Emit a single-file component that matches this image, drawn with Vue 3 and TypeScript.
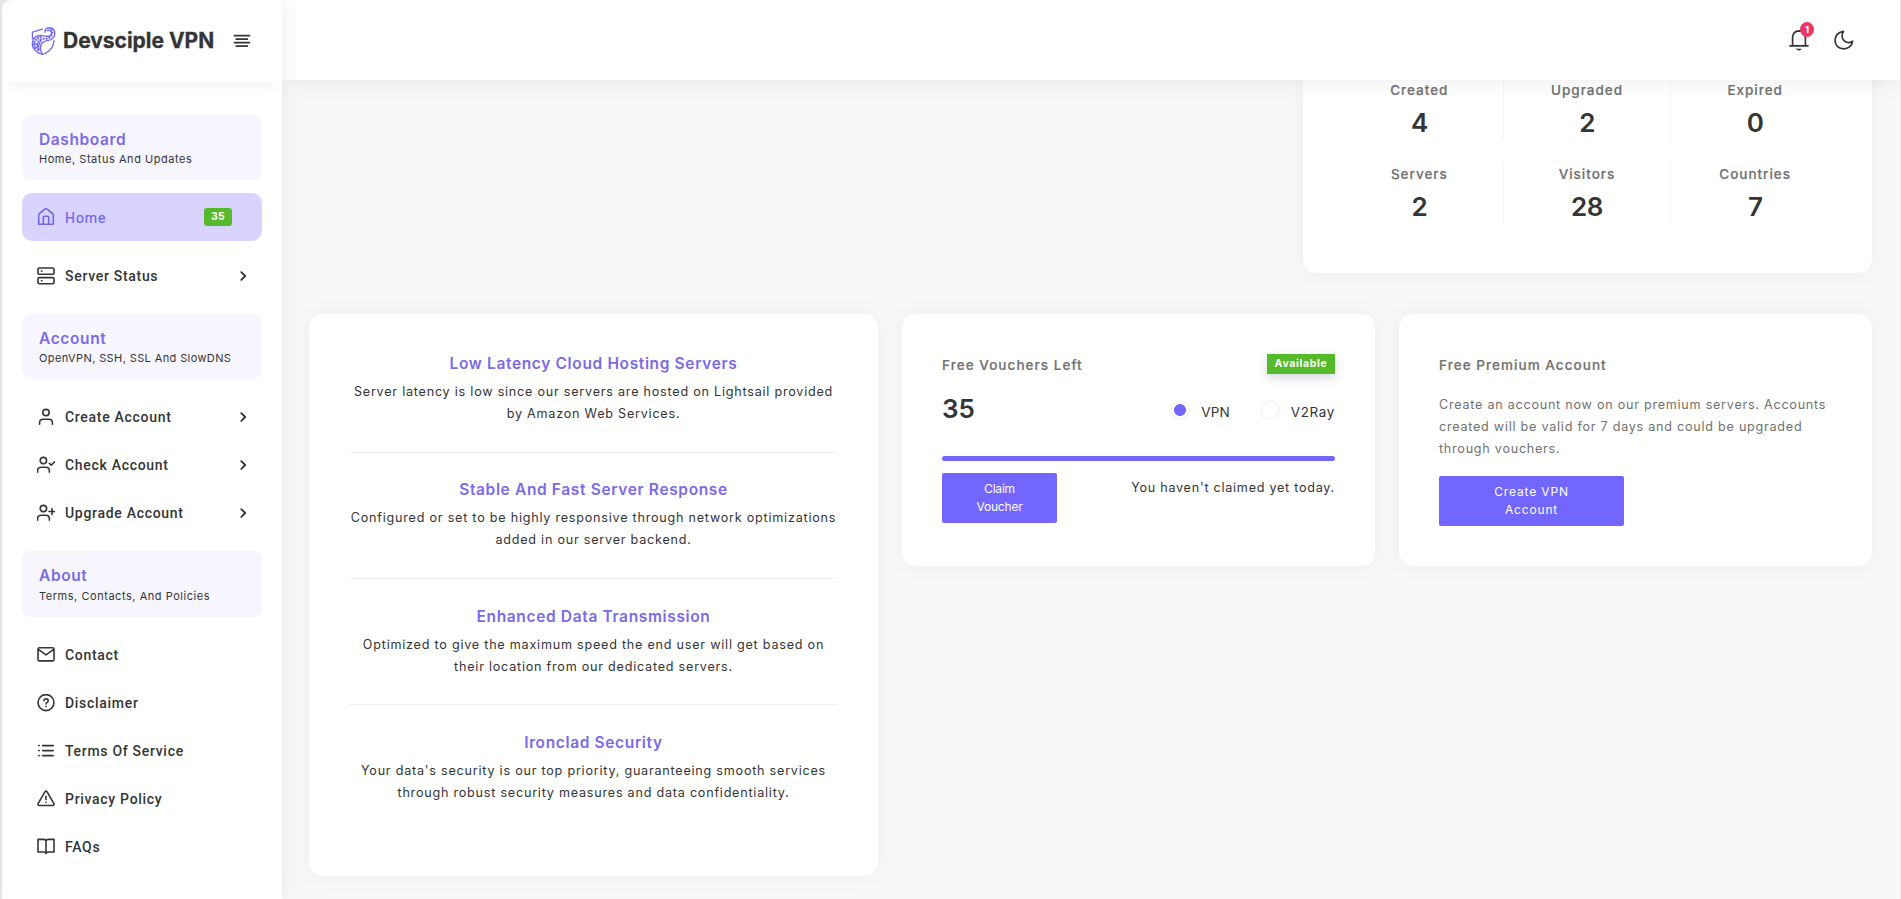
<script setup lang="ts">
interface NavItem {
  label: string
  icon: string
  arrow?: boolean
  badge?: string
  active?: boolean
}
interface NavGroup {
  title: string
  note: string
  items: NavItem[]
}

// Outline icons on an 18 x 18 grid
const icons: Record<string, string> = {
  home: 'M1.7 16.3V7.2Q1.7 6.2 2.5 5.5L7.9 1.2Q9 .4 10.1 1.2L15.5 5.5Q16.3 6.2 16.3 7.2V16.3ZM6.3 16V9.6Q6.3 8.2 7.6 8.2H10.4Q11.7 8.2 11.7 9.6V16',
  server: 'M2.2 1H15.8Q17 1 17 2.2V6Q17 7.2 15.8 7.2H2.2Q1 7.2 1 6V2.2Q1 1 2.2 1ZM2.2 10.6H15.8Q17 10.6 17 11.8V15.6Q17 16.8 15.8 16.8H2.2Q1 16.8 1 15.6V11.8Q1 10.6 2.2 10.6ZM4.4 4.1H4.9M4.4 13.7H4.9',
  user: 'M12.2 4.6A3.2 3.2 0 1 1 5.8 4.6A3.2 3.2 0 1 1 12.2 4.6M2.6 16.2V14.8Q2.6 11.2 6.2 11.2H11.8Q15.4 11.2 15.4 14.8V16.2',
  check: 'M9.6 4.6A3.2 3.2 0 1 1 3.2 4.6A3.2 3.2 0 1 1 9.6 4.6M.6 16.2V14.8Q.6 11.2 4.2 11.2H8.8Q12.4 11.2 12.4 14.8V16.2M12.4 7.4L14.2 9.2L17.6 5.8',
  plus: 'M9.6 4.6A3.2 3.2 0 1 1 3.2 4.6A3.2 3.2 0 1 1 9.6 4.6M.6 16.2V14.8Q.6 11.2 4.2 11.2H8.8Q12.4 11.2 12.4 14.8V16.2M12 7.5H18M15 4.5V10.5',
  mail: 'M2.4 1.7H15.6Q17 1.7 17 3.1V13.5Q17 14.9 15.6 14.9H2.4Q1 14.9 1 13.5V3.1Q1 1.7 2.4 1.7ZM1.4 3.3L9 8.9L16.6 3.3',
  help: 'M17 8.6A8 8 0 1 1 1 8.6A8 8 0 1 1 17 8.6M6.9 6.8Q7 4.7 9.1 4.7Q11.2 4.8 11.2 6.7Q11.2 7.8 10 8.5Q9 9 9 10M9 12.4V12.6',
  list: 'M5.6 3.6H16.2M5.6 8.6H16.2M5.6 13.6H16.2M1.8 3.6H2.2M1.8 8.6H2.2M1.8 13.6H2.2',
  alert: 'M7.9 1.9Q9 .2 10.1 1.9L16.8 13.3Q17.6 15.3 15.6 15.5H2.4Q.4 15.3 1.2 13.3ZM9 6.2V9.6M9 12.3V12.5',
  book: 'M9 3.2Q8.6 1.4 6.8 1.4H1V14H6.8Q8.6 14 9 15.6Q9.4 14 11.2 14H17V1.4H11.2Q9.4 1.4 9 3.2ZM9 3.2V15.6'
}

const groups: NavGroup[] = [
  {
    title: 'Dashboard',
    note: 'Home, Status And Updates',
    items: [
      { label: 'Home', icon: 'home', badge: '35', active: true },
      { label: 'Server Status', icon: 'server', arrow: true }
    ]
  },
  {
    title: 'Account',
    note: 'OpenVPN, SSH, SSL And SlowDNS',
    items: [
      { label: 'Create Account', icon: 'user', arrow: true },
      { label: 'Check Account', icon: 'check', arrow: true },
      { label: 'Upgrade Account', icon: 'plus', arrow: true }
    ]
  },
  {
    title: 'About',
    note: 'Terms, Contacts, And Policies',
    items: [
      { label: 'Contact', icon: 'mail' },
      { label: 'Disclaimer', icon: 'help' },
      { label: 'Terms Of Service', icon: 'list' },
      { label: 'Privacy Policy', icon: 'alert' },
      { label: 'FAQs', icon: 'book' }
    ]
  }
]

const stats = [
  { label: 'Created', value: 4 },
  { label: 'Upgraded', value: 2 },
  { label: 'Expired', value: 0 },
  { label: 'Servers', value: 2 },
  { label: 'Visitors', value: 28 },
  { label: 'Countries', value: 7 }
]

const features = [
  {
    title: 'Low Latency Cloud Hosting Servers',
    lines: ['Server latency is low since our servers are hosted on Lightsail provided', 'by Amazon Web Services.']
  },
  {
    title: 'Stable And Fast Server Response',
    lines: ['Configured or set to be highly responsive through network optimizations', 'added in our server backend.']
  },
  {
    title: 'Enhanced Data Transmission',
    lines: ['Optimized to give the maximum speed the end user will get based on', 'their location from our dedicated servers.']
  },
  {
    title: 'Ironclad Security',
    lines: ["Your data's security is our top priority, guaranteeing smooth services", 'through robust security measures and data confidentiality.']
  }
]
</script>

<template>
  <div class="page">
    <aside class="sidebar">
      <div class="brand">
        <svg class="logo" viewBox="0 0 25 28" fill="none" stroke="#7366ff" stroke-linecap="round" stroke-linejoin="round">
          <path stroke-width="1.3" d="M11.4 2.2L1.4 5.2V11.6M23 13.6Q22.6 19.6 18.4 23.4Q14.6 26.8 11.2 27.2" />
          <path stroke-width="1.4" d="M14 5.2Q13.6 1.2 18 .8Q23.6 .8 23.8 6Q23.8 12.2 17.6 13.4Q12.2 13.8 10.2 17.4Q8.2 21.4 11.2 27" />
          <path stroke-width="1.4" d="M16 3.6Q18.4 2.6 20 4.4Q21.6 7.4 18.2 9.2Q14.4 9.6 11.4 8.6Q4.4 8 2 13.2Q.2 18.8 3.4 22.6Q6.4 26.2 11.2 27.2" />
          <path stroke-width="2.3" stroke-dasharray=".1 2.9" d="M20.6 2.6Q22.4 6.8 19.4 10Q16.8 12 12.2 11.8Q7.6 12.8 6.2 16.8Q5.4 20.4 8 24.4" />
          <path stroke-width="2.2" stroke-dasharray=".1 2.6" d="M9.8 10.2Q4.4 11.6 3.2 15.8Q2.8 19.4 5.2 22.4M9.6 14.2Q7.6 16.4 7.6 20" />
          <path stroke-width="1.2" d="M2 17.2Q5.6 16 7.6 19.6M3.2 21.4Q6.4 20 8.8 22.4" />
        </svg>
        <span class="brand-name">Devsciple VPN</span>
        <svg class="menu" viewBox="0 0 18 14" stroke="#333536" stroke-width="1.7" stroke-linecap="round">
          <path d="M1.4 1.7H16.4M3.2 5.1H14.4M1.4 8.6H16.4M3.2 12.1H14.4" />
        </svg>
      </div>
      <nav class="nav">
        <section v-for="group in groups" :key="group.title" class="group">
          <div class="group-head">
            <div class="group-title">{{ group.title }}</div>
            <div class="group-note">{{ group.note }}</div>
          </div>
          <ul class="links">
            <li v-for="item in group.items" :key="item.label" class="link" :class="{ active: item.active }">
              <svg class="link-icon" viewBox="0 0 18 18"><path :d="icons[item.icon]" /></svg>
              <span class="link-label">{{ item.label }}</span>
              <span v-if="item.badge" class="count">{{ item.badge }}</span>
              <svg v-if="item.arrow" class="arrow" viewBox="0 0 7 10"><path d="M1.3 1.2L5.2 5L1.3 8.8" /></svg>
            </li>
          </ul>
        </section>
      </nav>
    </aside>

    <div class="main">
      <header class="topbar">
        <div class="bell">
          <svg viewBox="0 0 20 22" fill="none" stroke="#333536" stroke-width="1.7" stroke-linecap="round" stroke-linejoin="round">
            <path d="M1 16.8H19M3.6 16.6V8.2Q4 2 10 1.8Q16 2 16.4 8.2V16.6" />
            <path d="M7.8 20H12.2Q11.6 21.2 10 21.2Q8.4 21.2 7.8 20Z" fill="#333536" stroke-width=".6" />
          </svg>
          <span class="bell-count">1</span>
        </div>
        <svg class="moon" viewBox="0 0 20 20" fill="none" stroke="#333536" stroke-width="1.7" stroke-linecap="round" stroke-linejoin="round">
          <path d="M9.3 1.4Q6 8 11.2 11.6Q14.8 13.8 18.6 11.2Q17.6 18.2 10.2 18.8Q1.4 18.4 1 10.2Q1.4 2.8 9.3 1.4Z" />
        </svg>
      </header>

      <div class="card stats">
        <div v-for="stat in stats" :key="stat.label" class="stat">
          <div class="stat-label">{{ stat.label }}</div>
          <div class="stat-value">{{ stat.value }}</div>
        </div>
      </div>

      <div class="row">
        <div class="card features">
          <div v-for="feature in features" :key="feature.title" class="feature">
            <div class="feature-title">{{ feature.title }}</div>
            <div v-for="line in feature.lines" :key="line" class="feature-line">{{ line }}</div>
          </div>
        </div>

        <div class="card panel">
          <div class="split">
            <div class="panel-title">Free Vouchers Left</div>
            <span class="available">Available</span>
          </div>
          <div class="split vouchers">
            <div class="stat-value total">35</div>
            <div class="radios">
              <span class="radio on"></span><span class="radio-label first">VPN</span>
              <span class="radio"></span><span class="radio-label">V2Ray</span>
            </div>
          </div>
          <div class="progress"></div>
          <div class="split claim">
            <button class="btn btn-claim">Claim<br />Voucher</button>
            <span class="claim-note">You haven't claimed yet today.</span>
          </div>
        </div>

        <div class="card panel">
          <div class="panel-title">Free Premium Account</div>
          <p class="premium">
            Create an account now on our premium servers. Accounts<br />created will be valid for 7 days and could be upgraded<br />through vouchers.
          </p>
          <button class="btn btn-create">Create VPN<br />Account</button>
        </div>
      </div>
    </div>
  </div>
</template>

<style>
body {
  margin: 0;
  background: #ebebec;
  overflow: hidden;
}
</style>

<style scoped>
.page {
  display: flex;
  box-sizing: border-box;
  height: 899px;
  padding: 0 1px 0 2px;
  font-family: Inter, 'Liberation Sans', sans-serif;
  color: #333536;
  overflow: hidden;
}
.sidebar {
  flex: none;
  width: 280px;
  background: #fff;
  border-top-left-radius: 9px;
  box-shadow: 0 0 20px rgba(89, 102, 122, 0.1);
  position: relative;
  z-index: 3;
}
.brand {
  display: flex;
  align-items: center;
  height: 82px;
  box-sizing: border-box;
  padding-left: 29px;
  box-shadow: 0 9px 12px -8px rgba(89, 102, 122, 0.13);
}
.logo {
  width: 25px;
  height: 28px;
}
.brand-name {
  margin-left: 7px;
  width: 153px;
  font-size: 21px;
  font-weight: 700;
  line-height: 28px;
  letter-spacing: -0.02px;
  white-space: nowrap;
  -webkit-text-stroke: 0.3px #333536;
}
.menu {
  width: 18px;
  height: 14px;
  margin-left: 17px;
}
.nav {
  padding: 33px 20px 0;
}
.group {
  margin-bottom: 14px;
}
.group-head {
  height: 65px;
  box-sizing: border-box;
  padding: 14px 0 0 17px;
  border-radius: 9px;
  background: #f7f6ff;
}
.group:last-child .group-head {
  height: 66px;
}
.group-title {
  font-size: 15.5px;
  font-weight: 600;
  line-height: 21px;
  letter-spacing: 0.62px;
  color: #7a6ae8;
}
.group-note {
  font-size: 11px;
  line-height: 18px;
  letter-spacing: 0.54px;
  white-space: nowrap;
}
.group:nth-child(2) .group-note {
  letter-spacing: 0.39px;
}
.group:last-child .group-note {
  margin-top: 1px;
}
.links {
  list-style: none;
  margin: 14px 0 0;
  padding: 0;
}
.link {
  display: flex;
  align-items: center;
  height: 48px;
  box-sizing: border-box;
  padding: 0 15px 0 15px;
  border-radius: 10px;
  font: 500 14px/20px Roboto, 'Liberation Sans', sans-serif;
  letter-spacing: 0.7px;
}
.link.active {
  margin-top: -1px;
  margin-bottom: 11px;
  padding-right: 30px;
  background: #d9d4ff;
  color: #7366e8;
}
.link.active .link-label {
  padding-top: 2px;
  font-weight: 400;
  letter-spacing: 0.9px;
  -webkit-text-stroke: 0.2px #7366e8;
}
.link-icon {
  width: 18px;
  height: 18px;
  margin-right: 10px;
  fill: none;
  stroke: currentColor;
  stroke-width: 1.6;
  stroke-linecap: round;
  stroke-linejoin: round;
}
.link-label {
  flex: 1;
}
.count {
  width: 28px;
  height: 18px;
  margin-top: -1px;
  border-radius: 3px;
  background: #54ba2a;
  color: #fff;
  font: 700 10.5px/17px Inter, sans-serif;
  letter-spacing: 0.3px;
  text-align: center;
}
.arrow {
  width: 7px;
  height: 10px;
  fill: none;
  stroke: #333536;
  stroke-width: 1.8;
  stroke-linecap: round;
  stroke-linejoin: round;
}
.main {
  position: relative;
  flex: 1;
  min-width: 0;
  padding: 0 28px 0 27px;
  background: #f8f8f8;
}
.topbar {
  position: absolute;
  z-index: 2;
  inset: 0 0 auto;
  display: flex;
  align-items: center;
  justify-content: flex-end;
  box-sizing: border-box;
  height: 80px;
  padding-right: 46px;
  background: #fff;
  box-shadow: 0 0 20px rgba(89, 102, 122, 0.12);
}
.bell {
  position: relative;
  width: 20px;
  height: 22px;
  margin-right: 25px;
}
.bell svg {
  display: block;
  width: 20px;
  height: 22px;
}
.bell-count {
  position: absolute;
  left: 11px;
  top: -7px;
  width: 14px;
  height: 15px;
  border-radius: 50%;
  background: #ee3568;
  color: #fff;
  font: 700 9.5px/15px Inter, sans-serif;
  text-align: center;
}
.moon {
  width: 20px;
  height: 20px;
}
.card {
  box-sizing: border-box;
  border-radius: 14px;
  background: #fff;
  box-shadow: 0 0 20px rgba(8, 21, 66, 0.05);
}
.stats {
  display: grid;
  grid-template-columns: repeat(3, 1fr);
  grid-auto-rows: 63px;
  row-gap: 21px;
  width: 569px;
  height: 273px;
  margin-left: auto;
  padding: 78px 33px 0;
}
.stat {
  text-align: center;
  border-right: 1px solid #f5f5f6;
}
.stat:nth-child(3n) {
  border-right: 0;
}
.stat-label {
  font-size: 13.5px;
  font-weight: 500;
  line-height: 25px;
  letter-spacing: 0.98px;
  color: #717171;
  margin-bottom: 4px;
  -webkit-text-stroke: 0.2px #717171;
}
.stat-value {
  font-size: 26px;
  font-weight: 600;
  line-height: 32px;
  letter-spacing: -0.5px;
}
.row {
  display: grid;
  grid-template-columns: 569px 473px 473px;
  column-gap: 24px;
  align-items: start;
  margin-top: 41px;
}
.features {
  height: 562px;
  padding: 38px 41px 0;
  text-align: center;
}
.feature {
  padding-bottom: 26.8px;
  margin-bottom: 25.5px;
  border-bottom: 1px solid #f0f0f1;
}
.feature:last-child {
  border-bottom: 0;
}
.feature-title {
  margin-bottom: 5px;
  font-size: 15.5px;
  font-weight: 600;
  line-height: 24px;
  letter-spacing: 0.64px;
  color: #7a6ae8;
}
.feature-line {
  margin: 0 -10px;
  font-size: 12.6px;
  line-height: 22px;
  letter-spacing: 0.77px;
  white-space: nowrap;
}
.panel {
  height: 252px;
  padding: 39px 40px 0;
}
.split {
  display: flex;
  justify-content: space-between;
  align-items: flex-start;
}
.panel-title {
  font-size: 13.5px;
  font-weight: 500;
  line-height: 25px;
  letter-spacing: 1.05px;
  color: #717171;
  -webkit-text-stroke: 0.2px #717171;
}
.available {
  width: 68px;
  height: 20px;
  margin-top: 1px;
  background: #54ba2a;
  color: #fff;
  font-size: 10.5px;
  font-weight: 700;
  line-height: 19px;
  letter-spacing: 0.65px;
  text-align: center;
  box-shadow: 0 4px 10px rgba(89, 102, 122, 0.25);
}
.vouchers {
  margin-top: 14px;
}
.total {
  padding-top: 1px;
  letter-spacing: 0;
}
.radios {
  display: flex;
  align-items: center;
  height: 36px;
}
.radio {
  box-sizing: border-box;
  width: 20px;
  height: 20px;
  border: 2px solid #f6f6f9;
  border-radius: 50%;
}
.radio.on {
  background: radial-gradient(circle, #7366ff 5.6px, #fff 6.2px);
}
.radio-label {
  margin: 3px 0 0 11px;
  font-size: 13.5px;
  line-height: 24px;
  letter-spacing: 0.6px;
}
.radio-label.first {
  margin-right: 30px;
  letter-spacing: 0.2px;
}
.progress {
  height: 5px;
  margin-top: 28px;
  border-radius: 2.5px;
  background: #7366f8;
}
.claim {
  margin-top: 12px;
}
.btn {
  display: block;
  height: 50px;
  padding: 0;
  border: 0;
  border-radius: 2px;
  background: #7366ff;
  color: #fff;
  font: 400 12px/18px Inter, sans-serif;
}
.btn-claim {
  width: 115px;
  letter-spacing: -0.2px;
}
.btn-create {
  width: 185px;
  letter-spacing: 0.85px;
}
.claim-note {
  margin-top: 4px;
  font-size: 12.6px;
  line-height: 22px;
  letter-spacing: 0.74px;
}
.premium {
  margin: 16px 0 16px;
  font-size: 12.6px;
  line-height: 22px;
  letter-spacing: 0.75px;
  color: #717171;
  white-space: nowrap;
}
</style>
